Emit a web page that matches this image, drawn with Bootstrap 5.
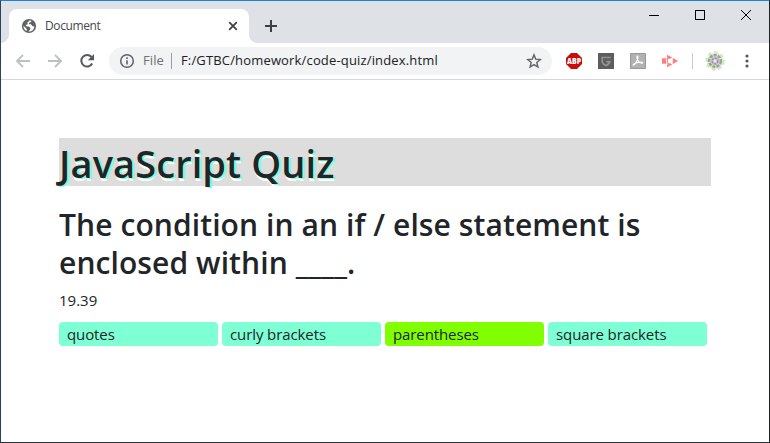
<!DOCTYPE html>
<html lang="en">
<head>
<meta charset="utf-8">
<meta name="viewport" content="width=device-width, initial-scale=1">
<title>Document</title>
<link rel="stylesheet" href="https://cdn.jsdelivr.net/npm/bootstrap@5.3.0/dist/css/bootstrap.min.css">
<style>
body { font-family: "Open Sans", "Noto Sans", sans-serif; color: #212529; }
.browser { width: 770px; height: 443px; border: 1px solid; border-color: #1a82d6 #202124 #2b3138 #29445b; background: #fff; }
.tabstrip { height: 42px; background: #dee1e6; padding-left: 8px; }
.tab { width: 240px; height: 34px; margin-top: 8px; padding: 0 11px 0 12px; background: #fff; border-radius: 8px 8px 0 0; }
.tab::before, .tab::after { content: ""; position: absolute; bottom: 0; width: 8px; height: 8px; }
.tab::before { left: -8px; background: radial-gradient(circle at 0 0, transparent 7.5px, #fff 8px); }
.tab::after { right: -8px; background: radial-gradient(circle at 100% 0, transparent 7.5px, #fff 8px); }
.tab-title { font-size: 12px; letter-spacing: -.4px; color: #45494d; margin-left: 8px; }
.new-tab { margin: 19px 0 0 16px; }
.win-controls { gap: 35px; padding: 8px 17px 0 0; }
.toolbar { height: 37px; border-bottom: 1px solid #d5d7da; }
.nav-icons { width: 108px; padding-left: 14px; gap: 16px; }
.address { width: 443px; height: 28px; background: #f1f3f4; padding: 0 10px 0 10px; font-size: 13px; border-radius: 14px; }
.scheme { color: #6d7175; margin-left: 8px; letter-spacing: .1px; }
.split { width: 1px; height: 16px; background: #9aa0a6; margin: 0 9px 0 7px; }
.url { letter-spacing: .16px; color: #202124; }
.extension-first { margin-left: 14px; }
.divider { width: 1px; height: 16px; background: #c9cbce; margin-left: 14px; }
.profile { margin-left: 12px; }
.menu-dots { margin-left: 14px; }
.page { padding: 58px 58px 0; }
.quiz-title { font-size: 38px; line-height: 48px; height: 48px; padding-top: 1px; font-weight: 600; letter-spacing: .1px; background: #ddd; text-shadow: 2px 1px aquamarine, 1px 3px #fff; margin-bottom: 20px; }
.question { font-size: 30px; line-height: 38.4px; font-weight: 600; letter-spacing: .09px; margin-bottom: 5px; }
.timer { line-height: 24px; font-size: 15px; margin-bottom: 10px; }
.choices { gap: 4px; }
.choice { width: 159px; height: 24px; line-height: 24px; padding: 0 8px; border-radius: 4px; background: aquamarine; font-size: 15px; letter-spacing: -.1px; }
.choice.picked { background: chartreuse; }
</style>
<script src="https://cdn.jsdelivr.net/npm/bootstrap@5.3.0/dist/js/bootstrap.bundle.min.js"></script>
</head>
<body class="m-0 overflow-hidden">
<div class="browser">
  <header class="tabstrip d-flex align-items-start w-100">
    <div class="tab position-relative d-flex align-items-center">
      <svg width="16" height="16" viewBox="0 0 16 16"><circle cx="8" cy="8" r="7.1" fill="#5f6368"/><path d="M8.6 2.4 6.2 4.7l.7 1.4-2.2 1.1 1 1.3H8l1.3 1.5-.2 1.8-1.8 1.8c3.5.2 5.8-2 6-5.2l-2.2-.5-1-1.6H8.4L7.8 5l2.5-1.2-.2-1.1zM2.4 7.8c0 2.6 1.2 4.3 3.3 5.2l.1-2.1z" fill="#fff"/></svg>
      <span class="tab-title">Document</span>
      <svg class="ms-auto" width="10" height="10" viewBox="0 0 10 10"><path d="m1.2 1.2 7.6 7.6m0-7.6L1.2 8.8" stroke="#3c4043" stroke-width="1.7"/></svg>
    </div>
    <svg class="new-tab" width="12" height="12" viewBox="0 0 12 12"><path d="M6 0v12M0 6h12" stroke="#3c4043" stroke-width="2"/></svg>
    <div class="win-controls d-flex ms-auto">
      <svg width="12" height="12" viewBox="0 0 12 12"><path d="M2 6.5h10" stroke="#000"/></svg>
      <svg width="11" height="12" viewBox="0 0 11 12"><path d="M1 1.5h9v9H1z" fill="none" stroke="#000" shape-rendering="crispEdges"/></svg>
      <svg width="12" height="12" viewBox="0 0 12 12"><path d="m1 1 10 10m0-10L1 11" stroke="#000"/></svg>
    </div>
  </header>
  <div class="toolbar d-flex align-items-center">
    <div class="nav-icons d-flex align-items-center">
      <svg width="16" height="16" viewBox="0 0 16 16" fill="none" stroke="#bdc0c3" stroke-width="1.8"><path d="M15 8H2m6-6L2 8l6 6"/></svg>
      <svg width="16" height="16" viewBox="0 0 16 16" fill="none" stroke="#bdc0c3" stroke-width="1.8"><path d="M1 8h13M8 2l6 6-6 6"/></svg>
      <svg width="16" height="16" viewBox="0 0 16 16"><path d="M13.2 10.6a5.8 5.8 0 1 1-.7-6.6" fill="none" stroke="#55595e" stroke-width="2"/><path d="M15 1v6.2H8.8z" fill="#55595e"/></svg>
    </div>
    <div class="address d-flex align-items-center">
      <svg width="16" height="16" viewBox="0 0 16 16"><circle cx="8" cy="8" r="6.3" fill="none" stroke="#5f6368" stroke-width="1.5"/><path d="M8 7.2v4.2M8 4.3v1.6" stroke="#5f6368" stroke-width="1.6"/></svg>
      <span class="scheme">File</span><span class="split"></span><span class="url">F:/GTBC/homework/code-quiz/index.html</span>
      <svg class="ms-auto" width="16" height="16" viewBox="0 0 16 16"><path d="m8 1.8 1.7 4.3 4.6.4-3.5 3 1.1 4.5L8 11.6 4.1 14l1.1-4.5-3.5-3 4.6-.4z" fill="none" stroke="#5f6368" stroke-width="1.4"/></svg>
    </div>
    <svg class="extension-first" width="16" height="16" viewBox="0 0 16 16"><path d="M5 0h6l5 5v6l-5 5H5l-5-5V5z" fill="#c70d0d"/><text x="8" y="11" text-anchor="middle" textLength="14" lengthAdjust="spacingAndGlyphs" font-family="Open Sans" font-weight="800" font-size="7.8" fill="#fff">ABP</text></svg>
    <svg class="ms-3" width="16" height="16" viewBox="0 0 16 16"><path fill="#5d5d5d" d="M0 0h16v16H0z"/><path d="M12.8 4.5H4.2v4.1c0 2 1.6 3 3.8 4 2.3-1.1 3.6-2 3.8-4H8.2" fill="none" stroke="#929292" stroke-width="1.7"/></svg>
    <svg class="ms-3" width="16" height="16" viewBox="0 0 16 16"><path fill="#b2b2b2" stroke="#989898" d="M.5.5h15v15H.5z"/><path d="M7.3 3c1.4-.2.5 3.6-1.1 6.2-1.4 2.5-3.6 3.8-3 2.4.7-1.5 9-3.5 9.5-1.9.2 1.2-3.3.2-4.7-2.1C6.8 5.7 6.7 3.3 7.3 3z" fill="none" stroke="#fff" stroke-width="1.1"/></svg>
    <svg class="ms-3" width="16" height="16" viewBox="0 0 16 16" fill="#ff8080"><path d="M0 5.3h4v5.4H0zM5 1.8l5.3 2.8L7.5 6 5 5.2zM5 14.2l5.3-2.8L7.5 10l-2.5.8zM10.8 4.8 16 8l-5.2 3.2zM4.8 4.5h1.1v7H4.8z"/></svg>
    <span class="divider"></span>
    <svg class="profile" width="20" height="20" viewBox="0 0 20 20"><circle cx="10" cy="10" r="8.4" fill="#e0efd8"/><circle cx="10" cy="10" r="8.5" fill="none" stroke="#d0e6c4" stroke-width="2.4" stroke-dasharray="3.5 3"/><circle cx="10" cy="10" r="5.8" fill="none" stroke="#97a88d" stroke-width="2.6" stroke-dasharray="3.2 1"/><circle cx="10" cy="10" r="4.4" fill="#c9bccf"/><circle cx="10" cy="10" r="2.8" fill="none" stroke="#9a86a5" stroke-width="1.3" stroke-dasharray="1.8 1.4"/><circle cx="10" cy="10" r="1.4" fill="#f2eaf5"/></svg>
    <svg class="menu-dots" width="16" height="16" viewBox="0 0 16 16" fill="#55595e"><circle cx="8" cy="3" r="1.6"/><circle cx="8" cy="8" r="1.6"/><circle cx="8" cy="13" r="1.6"/></svg>
  </div>
  <main class="page">
    <h1 class="quiz-title">JavaScript Quiz</h1>
    <h2 class="question">The condition in an if / else statement is<br>enclosed within ____.</h2>
    <p class="timer">19.39</p>
    <div class="choices d-flex">
      <div class="choice">quotes</div>
      <div class="choice">curly brackets</div>
      <div class="choice picked">parentheses</div>
      <div class="choice">square brackets</div>
    </div>
  </main>
</div>
</body>
</html>
